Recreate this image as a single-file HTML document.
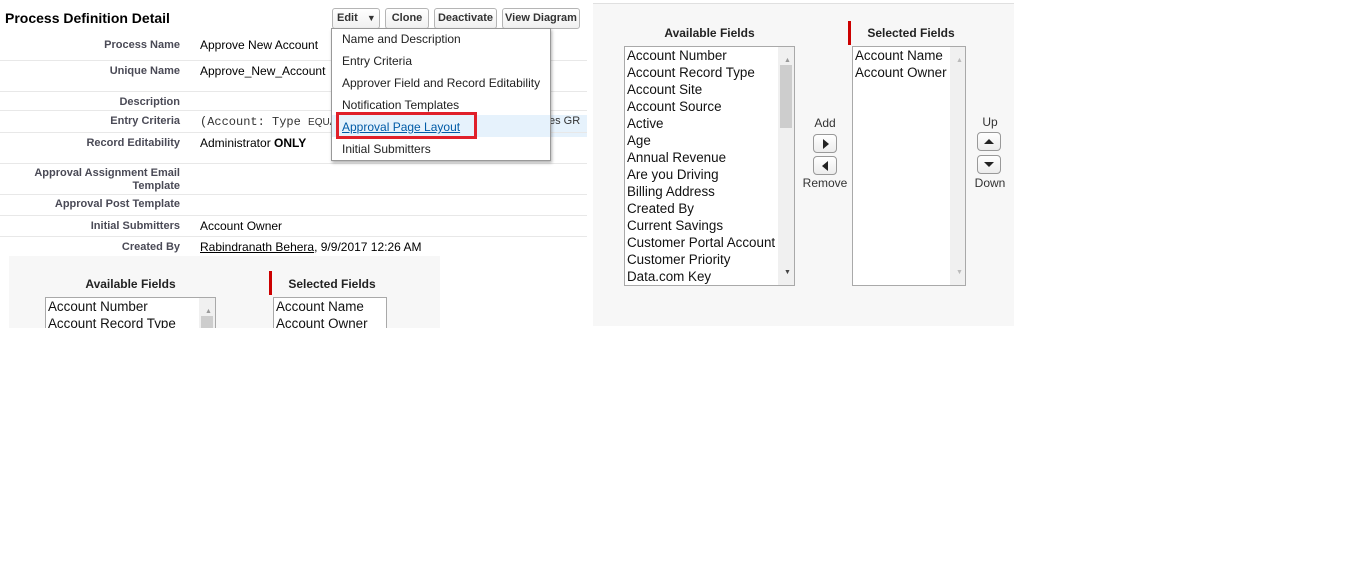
<!DOCTYPE html>
<html><head><meta charset="utf-8"><style>
*{margin:0;padding:0;box-sizing:border-box}
body{width:1365px;height:579px;background:#fff;position:relative;overflow:hidden;font-family:"Liberation Sans",Arial,sans-serif;color:#000}
.a{position:absolute;white-space:nowrap}
.lbl{position:absolute;right:1185px;font-size:11px;font-weight:bold;color:#4a4a56;text-align:right;line-height:13px}
.val{position:absolute;left:200px;font-size:12px;color:#000}
.sep{position:absolute;left:0;width:587px;height:1px;background:#e8e8e8}
.btn{position:absolute;top:8px;height:21px;border:1px solid #b5b5b5;border-radius:3px;background:linear-gradient(#fff,#f0f0f0);font-size:11px;font-weight:bold;color:#333;text-align:center;line-height:19px}
.mi{position:absolute;left:342px;font-size:12px;color:#222}
.panel{position:absolute;background:#f7f7f7}
.hd{position:absolute;font-size:12px;font-weight:bold;color:#222;text-align:center}
.lb{position:absolute;background:#fff;border:1px solid #a9a9a9;overflow:hidden}
.lb div{font-size:13.4px;line-height:17px;padding-left:2px;color:#111}
.sb{position:absolute;top:0;bottom:0;right:0;width:16px;background:#f0f0f0}
.thumb{position:absolute;left:2px;width:12px;background:#cdcdcd}
.red{position:absolute;width:3px;background:#c00}
.sm{position:absolute;font-size:12px;color:#333;text-align:center}
.ab{position:absolute;width:24px;height:19px;border:1px solid #999;border-radius:4px;background:linear-gradient(#fff,#ececec)}
</style></head><body>
<div class="a" style="left:5px;top:10px;font-size:14px;font-weight:bold">Process Definition Detail</div>

<div class="lbl" style="top:39px">Process Name</div><div class="val" style="top:38px">Approve New Account</div>
<div class="sep" style="top:60px"></div>
<div class="lbl" style="top:65px">Unique Name</div><div class="val" style="top:64px">Approve_New_Account</div>
<div class="sep" style="top:91px"></div>
<div class="lbl" style="top:96px">Description</div>
<div class="sep" style="top:110px"></div>
<div class="a" style="left:333px;top:115px;width:254px;height:22px;background:#e6f2fc"></div>
<div class="lbl" style="top:115px">Entry Criteria</div><div class="val" style="top:115px;font-family:'Liberation Mono',monospace;font-size:12px;color:#333">(Account: Type <span style="font-family:'Liberation Sans';font-size:10px">EQUA</span></div>
<div class="a" style="left:549px;top:115px;font-size:11px;color:#333">es GR</div>
<div class="sep" style="top:132px"></div>
<div class="lbl" style="top:137px">Record Editability</div><div class="val" style="top:136px">Administrator <b>ONLY</b></div>
<div class="sep" style="top:163px"></div>
<div class="lbl" style="top:167px">Approval Assignment Email<br>Template</div>
<div class="sep" style="top:194px"></div>
<div class="lbl" style="top:198px">Approval Post Template</div>
<div class="sep" style="top:215px"></div>
<div class="lbl" style="top:220px">Initial Submitters</div><div class="val" style="top:219px">Account Owner</div>
<div class="sep" style="top:236px"></div>
<div class="lbl" style="top:241px">Created By</div><div class="val" style="top:240px"><u>Rabindranath Behera</u>, 9/9/2017 12:26 AM</div>

<div class="btn" style="left:332px;width:48px;text-align:left;padding-left:4px">Edit <span style="font-size:9px;margin-left:6px">▼</span></div>
<div class="btn" style="left:385px;width:44px">Clone</div>
<div class="btn" style="left:434px;width:63px">Deactivate</div>
<div class="btn" style="left:502px;width:78px">View Diagram</div>

<div class="a" style="left:331px;top:28px;width:220px;height:133px;background:#fff;border:1px solid #999;box-shadow:1px 2px 3px rgba(0,0,0,.3)"></div>
<div class="a" style="left:332px;top:115px;width:218px;height:22px;background:#e6f2fc"></div>
<div class="mi" style="top:32px">Name and Description</div>
<div class="mi" style="top:54px">Entry Criteria</div>
<div class="mi" style="top:76px">Approver Field and Record Editability</div>
<div class="mi" style="top:98px">Notification Templates</div>
<div class="mi" style="top:120px;color:#015ba7;text-decoration:underline">Approval Page Layout</div>
<div class="mi" style="top:142px">Initial Submitters</div>
<div class="a" style="left:336px;top:112px;width:141px;height:27px;border:3px solid #e0202a"></div>

<div class="panel" style="left:593px;top:3px;width:421px;height:323px;border-top:1px solid #e0e0e0"></div>
<div class="hd" style="left:624px;top:26px;width:171px">Available Fields</div>
<div class="red" style="left:848px;top:21px;height:24px"></div>
<div class="hd" style="left:852px;top:26px;width:118px">Selected Fields</div>
<div class="lb" style="left:624px;top:46px;width:171px;height:240px">
<div>Account Number</div><div>Account Record Type</div><div>Account Site</div><div>Account Source</div><div>Active</div><div>Age</div><div>Annual Revenue</div><div>Are you Driving</div><div>Billing Address</div><div>Created By</div><div>Current Savings</div><div>Customer Portal Account</div><div>Customer Priority</div><div>Data.com Key</div>
<div class="sb"><div class="a" style="left:4px;top:5px;font-size:7px;color:#999">▲</div><div class="thumb" style="top:18px;height:63px"></div><div class="a" style="left:4px;bottom:4px;font-size:7px;color:#444">▼</div></div></div>
<div class="lb" style="left:852px;top:46px;width:114px;height:240px">
<div>Account Name</div><div>Account Owner</div>
<div class="sb" style="width:15px"><div class="a" style="left:4px;top:5px;font-size:7px;color:#bbb">▲</div><div class="a" style="left:4px;bottom:4px;font-size:7px;color:#bbb">▼</div></div></div>
<div class="sm" style="left:805px;top:116px;width:40px">Add</div>
<div class="ab" style="left:813px;top:134px"><div class="a" style="left:9px;top:4px;width:0;height:0;border-left:6px solid #222;border-top:5px solid transparent;border-bottom:5px solid transparent"></div></div>
<div class="ab" style="left:813px;top:156px"><div class="a" style="left:8px;top:4px;width:0;height:0;border-right:6px solid #222;border-top:5px solid transparent;border-bottom:5px solid transparent"></div></div>
<div class="sm" style="left:800px;top:176px;width:50px">Remove</div>
<div class="sm" style="left:970px;top:115px;width:40px">Up</div>
<div class="ab" style="left:977px;top:132px"><div class="a" style="left:6px;top:6px;width:0;height:0;border-bottom:5px solid #222;border-left:5px solid transparent;border-right:5px solid transparent"></div></div>
<div class="ab" style="left:977px;top:155px"><div class="a" style="left:6px;top:6px;width:0;height:0;border-top:5px solid #222;border-left:5px solid transparent;border-right:5px solid transparent"></div></div>
<div class="sm" style="left:970px;top:176px;width:40px">Down</div>

<div class="panel" style="left:9px;top:256px;width:431px;height:72px"></div>
<div class="hd" style="left:45px;top:277px;width:171px">Available Fields</div>
<div class="red" style="left:269px;top:271px;height:24px"></div>
<div class="hd" style="left:273px;top:277px;width:118px">Selected Fields</div>
<div class="lb" style="left:45px;top:297px;width:171px;height:40px">
<div>Account Number</div><div>Account Record Type</div>
<div class="sb"><div class="a" style="left:4px;top:5px;font-size:7px;color:#999">▲</div><div class="thumb" style="top:18px;height:40px"></div></div></div>
<div class="lb" style="left:273px;top:297px;width:114px;height:40px">
<div>Account Name</div><div>Account Owner</div></div>
<div class="a" style="left:0;top:328px;width:1365px;height:251px;background:#fff"></div>
</body></html>
